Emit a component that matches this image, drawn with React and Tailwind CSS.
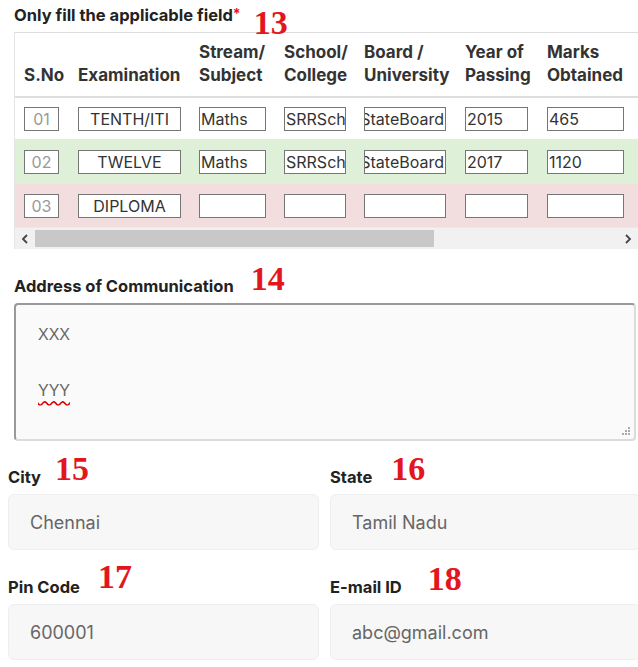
import React from 'react';

const font = { fontFamily: 'Inter, "Noto Sans", sans-serif' };

const cols = [
    { label: ['', 'S.No'], w: 'w-[54px]', iw: 'w-[35px]' },
    { label: ['', 'Examination'], w: 'w-[121px]', iw: 'w-[103px]' },
    { label: ['Stream/', 'Subject'], w: 'w-[85px]', iw: 'w-[67px]' },
    { label: ['School/', 'College'], w: 'w-[80px]', iw: 'w-[62px]' },
    { label: ['Board /', 'University'], w: 'w-[101px]', iw: 'w-[82px]' },
    { label: ['Year of', 'Passing'], w: 'w-[82px]', iw: 'w-[63px]' },
    { label: ['Marks', 'Obtained'], w: 'w-[101px]', iw: 'w-[77px]' },
];

const rows = [
    { bg: 'bg-white', h: 'h-[42px]', vals: ['01', 'TENTH/ITI', 'Maths', 'SRRSchool', 'StateBoard', '2015', '465'] },
    { bg: 'bg-[#dff0d8]', h: 'h-[44px]', vals: ['02', 'TWELVE', 'Maths', 'SRRSchool', 'StateBoard', '2017', '1120'] },
    { bg: 'bg-[#f2dede]', h: 'h-[44px]', vals: ['03', 'DIPLOMA', '', '', '', '', ''] },
];

function Num({ children, className }) {
    return (
        <span
            className={'text-[34px] font-bold leading-none text-[#e3151d] ' + className}
            style={{ fontFamily: '"Liberation Serif", serif' }}
        >
            {children}
        </span>
    );
}

function Cell({ value, index, width }) {
    let align = 'justify-start pl-px';
    let color = 'text-[#333]';
    if (index === 0) {
        align = 'justify-center';
        color = 'text-[#999]';
    } else if (index === 1) {
        align = 'justify-center';
    } else if (index === 4) {
        align = 'justify-end pr-px';
    }
    return (
        <div
            className={`${width} h-[24px] flex items-center overflow-hidden whitespace-nowrap border border-[#767676] bg-white text-[16px] ${align} ${color}`}
        >
            {value}
        </div>
    );
}

function Field({ label, num, numClass, value }) {
    return (
        <div>
            <div className="flex items-end h-[42px]">
                <span className="text-[16.5px] font-bold text-[#222] pb-[2px]">{label}</span>
                <Num className={numClass}>{num}</Num>
            </div>
            <div className="mt-[2px] h-[56px] rounded-md border border-[#eee] bg-[#f7f7f7] flex items-center pl-[21px] text-[18px] text-[#666]">
                {value}
            </div>
        </div>
    );
}

function Chevron({ left }) {
    return (
        <svg width="20" height="12" viewBox="0 0 20 12">
            <polyline
                points={left ? '12,2 8,6 12,10' : '8,2 12,6 8,10'}
                fill="none"
                stroke="#444"
                strokeWidth="1.8"
            />
        </svg>
    );
}

export default function App() {
    return (
        <div className="w-[638px] h-[667px] overflow-hidden bg-white" style={font}>
            <div className="pl-[14px] pt-[3px] flex items-start h-[32px]">
                <span className="text-[16.5px] font-bold text-[#222]">Only fill the applicable field</span>
                <span className="text-[#e3151d] text-[14px] font-bold">*</span>
                <Num className="ml-[13px] mt-[3px]">13</Num>
            </div>

            <div className="ml-[14px] border-l border-[#e5e5e5]">
                <div className="overflow-hidden">
                    <div className="flex w-max border-t border-b-2 border-[#ddd] h-[66px]">
                        {cols.map((c, i) => (
                            <div key={i} className={`${c.w} shrink-0 pl-[9px] pt-[8px] text-[17px] font-bold leading-[23px] text-[#333] whitespace-nowrap`}>
                                <div className="h-[23px]">{c.label[0]}</div>
                                <div>{c.label[1]}</div>
                            </div>
                        ))}
                    </div>
                    {rows.map((r, ri) => (
                        <div key={ri} className={`flex w-max ${r.h} items-center border-b border-[#e8e8e8] ${r.bg}`}>
                            {cols.map((c, i) => (
                                <div key={i} className={`${c.w} shrink-0 pl-[9px]`}>
                                    <Cell value={r.vals[i]} index={i} width={c.iw} />
                                </div>
                            ))}
                        </div>
                    ))}
                </div>
                <div className="h-[21px] bg-[#f1f1f1] flex items-center">
                    <Chevron left />
                    <div className="w-[399px] h-[17px] bg-[#c8c8c8]" />
                    <div className="flex-1" />
                    <Chevron />
                </div>
            </div>

            <div className="pl-[14px] mt-[21px] flex items-end h-[30px]">
                <span className="text-[16.5px] font-bold text-[#222] pb-[1px]">Address of Communication</span>
                <Num className="ml-[17px] mb-[4px]">14</Num>
            </div>

            <div className="ml-[14px] mr-[2px] mt-[3px] h-[138px] relative rounded border-2 border-t-[#9a9a9a] border-l-[#9a9a9a] border-r-[#dcdcdc] border-b-[#dcdcdc] bg-[#fafafa] pl-[22px] pt-[16px] text-[16px] text-[#666] leading-[28px]" style={{ fontFamily: '"Liberation Sans", Arial, sans-serif' }}>
                <div>XXX</div>
                <div>&nbsp;</div>
                <div className="underline decoration-wavy decoration-[#d00] underline-offset-4">YYY</div>
                <svg className="absolute right-[3px] bottom-[3px]" width="10" height="10" viewBox="0 0 10 10">
                    <rect x="7" y="1" width="2" height="2" fill="#aaa" />
                    <rect x="4" y="4" width="2" height="2" fill="#aaa" />
                    <rect x="7" y="4" width="2" height="2" fill="#aaa" />
                    <rect x="1" y="7" width="2" height="2" fill="#aaa" />
                    <rect x="4" y="7" width="2" height="2" fill="#aaa" />
                    <rect x="7" y="7" width="2" height="2" fill="#aaa" />
                </svg>
            </div>

            <div className="ml-[8px] mt-[9px] grid grid-cols-[311px_311px] gap-x-[11px] gap-y-[10px]">
                <Field label="City" num="15" numClass="ml-[14px] mb-[6px]" value="Chennai" />
                <Field label="State" num="16" numClass="ml-[19px] mb-[6px]" value="Tamil Nadu" />
                <Field label="Pin Code" num="17" numClass="ml-[18px] mb-[8px]" value="600001" />
                <Field label="E-mail ID" num="18" numClass="ml-[26px] mb-[6px]" value="abc@gmail.com" />
            </div>
        </div>
    );
}
